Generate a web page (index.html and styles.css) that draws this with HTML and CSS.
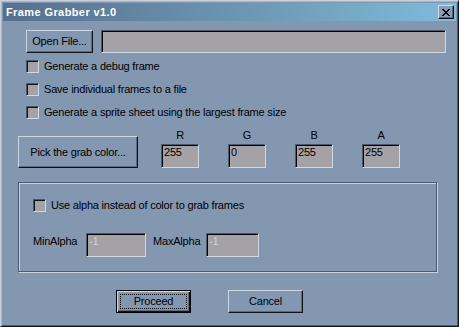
FILE: index.html
```html
<!DOCTYPE html>
<html>
<head>
<meta charset="utf-8">
<title>Frame Grabber v1.0</title>
<link rel="stylesheet" href="styles.css">
</head>
<body>
<div class="window">
  <div class="titlebar">
    <span class="title">Frame Grabber v1.0</span>
    <div class="close"><svg width="8" height="7" viewBox="0 0 8 7" shape-rendering="crispEdges"><path d="M0 0h2v1h-2zM6 0h2v1h-2zM1 1h2v1h-2zM5 1h2v1h-2zM2 2h4v1h-4zM3 3h2v1h-2zM2 4h4v1h-4zM1 5h2v1h-2zM5 5h2v1h-2zM0 6h2v1h-2zM6 6h2v1h-2z" fill="#000"/></svg></div>
  </div>
  <div class="content">
    <div class="open-row">
      <div class="btn open-btn">Open File...</div>
      <div class="field file-field"></div>
    </div>
    <div class="checks">
      <div class="check"><span class="box"></span><span>Generate a debug frame</span></div>
      <div class="check"><span class="box"></span><span>Save individual frames to a file</span></div>
      <div class="check"><span class="box"></span><span>Generate a sprite sheet using the largest frame size</span></div>
    </div>
    <div class="color-row">
      <div class="btn pick-btn">Pick the grab color...</div>
      <div class="channels">
        <div class="channel"><div class="ch-label">R</div><div class="field ch-field">255</div></div>
        <div class="channel"><div class="ch-label">G</div><div class="field ch-field">0</div></div>
        <div class="channel"><div class="ch-label">B</div><div class="field ch-field">255</div></div>
        <div class="channel"><div class="ch-label">A</div><div class="field ch-field">255</div></div>
      </div>
    </div>
    <div class="group">
      <div class="check"><span class="box"></span><span>Use alpha instead of color to grab frames</span></div>
      <div class="alpha-row">
        <span class="alpha-label">MinAlpha</span>
        <div class="field disabled min-field">-1</div>
        <span class="alpha-label max-label">MaxAlpha</span>
        <div class="field disabled max-field">-1</div>
      </div>
    </div>
    <div class="actions">
      <div class="btn default-btn"><span class="focus">Proceed</span></div>
      <div class="btn cancel-btn">Cancel</div>
    </div>
  </div>
</div>
</body>
</html>
```
FILE: styles.css
```css
* { box-sizing: border-box; }
html, body { margin: 0; padding: 0; }
body {
  width: 459px;
  height: 327px;
  overflow: hidden;
  background: #8497b0;
  font-family: "Liberation Sans", Arial, sans-serif;
  font-size: 11px;
  line-height: 13px;
  letter-spacing: -0.2px;
  color: #000;
}
.window {
  width: 459px;
  height: 327px;
  background: #8497b0;
  border: 1px solid;
  border-color: #c8d2de #10161e #10161e #c8d2de;
  box-shadow: inset 1px 1px 0 #a6b5c8, inset -1px -1px 0 #4e5c70;
  padding: 2px;
  display: flex;
  flex-direction: column;
}
.titlebar {
  height: 18px;
  flex: none;
  background: linear-gradient(to right, #56708e 0%, #6d98b4 55%, #7ebcda 100%);
  display: flex;
  align-items: center;
  justify-content: space-between;
  padding: 0 2px 0 3px;
}
.title {
  color: #fff;
  font-weight: bold;
  font-size: 11px;
  letter-spacing: 0.4px;
}
.close {
  width: 16px;
  height: 14px;
  background: #8a9cb4;
  border: 1px solid;
  border-color: #d2dce8 #0c1016 #0c1016 #d2dce8;
  box-shadow: inset -1px -1px 0 #56667c;
  display: flex;
  align-items: center;
  justify-content: center;
  padding-right: 1px;
}
.close svg { display: block; }
.content {
  padding-left: 15px;
  display: flex;
  flex-direction: column;
}
.btn {
  display: flex;
  align-items: center;
  justify-content: center;
  background: #8497b0;
  border: 1px solid;
  border-color: #cdd7e3 #0e131a #0e131a #cdd7e3;
  box-shadow: inset -1px -1px 0 #5a6a80;
  white-space: nowrap;
}
.field {
  background: #a4a1a7;
  border: 1px solid;
  border-color: #4c5a6c #d0dae6 #d0dae6 #4c5a6c;
  box-shadow: inset 1px 1px 0 #000;
  padding: 1px 0 0 2px;
  white-space: nowrap;
}
.open-row {
  margin-top: 9px;
  margin-left: 8px;
  display: flex;
  gap: 8px;
  height: 23px;
}
.open-btn { width: 67px; height: 23px; }
.file-field { width: 345px; height: 23px; }
.checks {
  margin-top: 7px;
  margin-left: 8px;
  display: flex;
  flex-direction: column;
  gap: 10px;
}
.check {
  display: flex;
  align-items: center;
  gap: 5px;
  height: 13px;
  white-space: nowrap;
}
.box {
  width: 13px;
  height: 13px;
  flex: none;
  background: #a4a1a7;
  border: 1px solid;
  border-color: #48566a #d0dae6 #d0dae6 #48566a;
  box-shadow: inset 1px 1px 0 #10141a;
}
.color-row {
  margin-top: 10px;
  display: flex;
  align-items: flex-start;
}
.pick-btn {
  width: 120px;
  height: 32px;
  margin-top: 7px;
}
.channels {
  margin-left: 23px;
  display: flex;
  gap: 29px;
}
.channel {
  width: 38px;
  display: flex;
  flex-direction: column;
  align-items: center;
}
.ch-label { height: 13px; }
.ch-field {
  margin-top: 2px;
  width: 38px;
  height: 24px;
}
.group {
  margin-top: 14px;
  width: 419px;
  height: 90px;
  border: 1px solid #4a5a70;
  box-shadow: inset 1px 1px 0 #c8d4e0, 1px 1px 0 #c8d4e0;
  padding: 16px 0 0 14px;
  display: flex;
  flex-direction: column;
}
.alpha-row {
  margin-top: 21px;
  display: flex;
  align-items: flex-start;
}
.alpha-label {
  width: 53px;
  padding-top: 2px;
}
.max-label { margin-left: 7px; }
.min-field { width: 60px; height: 24px; }
.max-field { width: 53px; height: 24px; }
.field.disabled { color: #c9d0d9; }
.actions {
  margin-top: 18px;
  margin-left: 98px;
  display: flex;
  gap: 37px;
}
.default-btn {
  width: 75px;
  height: 23px;
  border: 1px solid #000;
  box-shadow: inset 1px 1px 0 #cdd7e3, inset -1px -1px 0 #0e131a, inset -2px -2px 0 #5a6a80;
  padding: 3px;
}
.focus {
  flex: 1;
  align-self: stretch;
  display: flex;
  align-items: center;
  justify-content: center;
  outline: 1px dotted #000;
  outline-offset: -1px;
}
.cancel-btn { width: 75px; height: 23px; }
```
